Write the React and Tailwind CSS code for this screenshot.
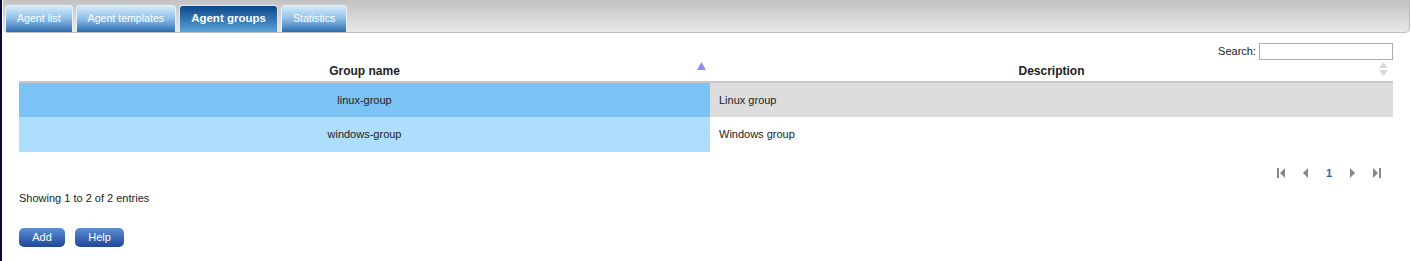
import React from 'react';

const tabs = ['Agent list', 'Agent templates', 'Agent groups', 'Statistics'];

const rows = [
  { name: 'linux-group', description: 'Linux group' },
  { name: 'windows-group', description: 'Windows group' },
];

const PageIcon = ({ type }) => {
  // small gray pagination glyphs
  if (type === 'first')
    return (
      <svg width="8" height="10" viewBox="0 0 8 10">
        <rect x="0" y="0" width="2" height="10" fill="#888" />
        <polygon points="8,0 8,10 3,5" fill="#888" />
      </svg>
    );
  if (type === 'prev')
    return (
      <svg width="6" height="10" viewBox="0 0 6 10">
        <polygon points="6,0 6,10 1,5" fill="#888" />
      </svg>
    );
  if (type === 'next')
    return (
      <svg width="6" height="10" viewBox="0 0 6 10">
        <polygon points="0,0 0,10 5,5" fill="#888" />
      </svg>
    );
  return (
    <svg width="8" height="10" viewBox="0 0 8 10">
      <polygon points="0,0 0,10 5,5" fill="#888" />
      <rect x="6" y="0" width="2" height="10" fill="#888" />
    </svg>
  );
};

export default function App() {
  return (
    <div className="flex h-[261px] w-[1411px] bg-white font-['Liberation_Sans',Arial,sans-serif] text-[11px] text-[#222]">
      {/* left frame line */}
      <div className="w-[2px] shrink-0 bg-[#0a0a3a]" />

      <div className="flex flex-1 flex-col">
        {/* Tab bar */}
        <div className="ml-[1px] mr-[1px] flex h-[33px] items-end gap-[3px] rounded-b-[5px] border-b border-r border-[#bdbdbd] bg-gradient-to-b from-[#c2c2c2] to-[#e9e9e9] pl-[2px]">
          {tabs.map((tab) => {
            const active = tab === 'Agent groups';
            return (
              <div
                key={tab}
                className={`flex h-[27px] items-center rounded-t-[4px] border border-b-0 px-[11px] text-white ${
                  active
                    ? 'border-[#e6e6e6] bg-gradient-to-b from-[#0a4789] to-[#5aa3d8] text-[11.5px] font-bold'
                    : 'border-[#e6f1fa] bg-gradient-to-b from-[#d6ecfa] via-[#8dbde6] to-[#2c6cae] text-[10.6px]'
                }`}
              >
                {tab}
              </div>
            );
          })}
        </div>

        {/* Table section */}
        <div className="flex flex-col pl-[17px] pr-[18px]">
          <div className="mt-[10px] flex items-center justify-end gap-[3px] text-[11px]">
            <span>Search:</span>
            <input className="h-[17px] w-[134px] border border-[#a6adb3] bg-white outline-none" />
          </div>

          <table className="w-full border-collapse">
            <thead>
              <tr className="h-[22px] border-b-2 border-[#c8c8c8]">
                <th className="relative w-[691px] pt-[1px] text-center text-[12px] font-bold">
                  Group name
                  <svg className="absolute right-[4px] top-[2px]" width="9" height="8" viewBox="0 0 9 8">
                    <polygon points="4.5,0 9,8 0,8" fill="#8d8ff0" />
                  </svg>
                </th>
                <th className="relative pt-[1px] text-center text-[12px] font-bold">
                  Description
                  <svg className="absolute right-[5px] top-[2px]" width="9" height="15" viewBox="0 0 9 15">
                    <polygon points="4.5,0 9,6 0,6" fill="#d8d8d8" />
                    <polygon points="0,8 9,8 4.5,14" fill="#d8d8d8" />
                  </svg>
                </th>
              </tr>
            </thead>
            <tbody>
              {rows.map((row, i) => (
                <tr key={row.name} className="h-[35px]">
                  <td className={`text-center ${i === 0 ? 'bg-[#7bc2f5]' : 'bg-[#aedefe]'}`}>{row.name}</td>
                  <td className={`pl-[9px] ${i === 0 ? 'bg-[#dddddd]' : 'bg-white'}`}>{row.description}</td>
                </tr>
              ))}
            </tbody>
          </table>

          <div className="mt-[13px] flex items-center justify-end pr-[4px]">
            <span className="flex w-[24px] justify-center"><PageIcon type="first" /></span>
            <span className="flex w-[24px] justify-center"><PageIcon type="prev" /></span>
            <span className="flex w-[24px] justify-center text-[11px] font-bold text-[#1f6cb0]">1</span>
            <span className="flex w-[24px] justify-center"><PageIcon type="next" /></span>
            <span className="flex w-[24px] justify-center"><PageIcon type="last" /></span>
          </div>

          <div className="mt-[8px] text-[11px]">Showing 1 to 2 of 2 entries</div>

          <div className="mt-[22px] flex gap-[10px]">
            <button className="h-[19px] w-[46px] rounded-[5px] bg-gradient-to-b from-[#5f8fd3] to-[#21459a] text-[11px] text-white">
              Add
            </button>
            <button className="h-[19px] w-[49px] rounded-[5px] bg-gradient-to-b from-[#5f8fd3] to-[#21459a] text-[11px] text-white">
              Help
            </button>
          </div>
        </div>
      </div>
    </div>
  );
}
